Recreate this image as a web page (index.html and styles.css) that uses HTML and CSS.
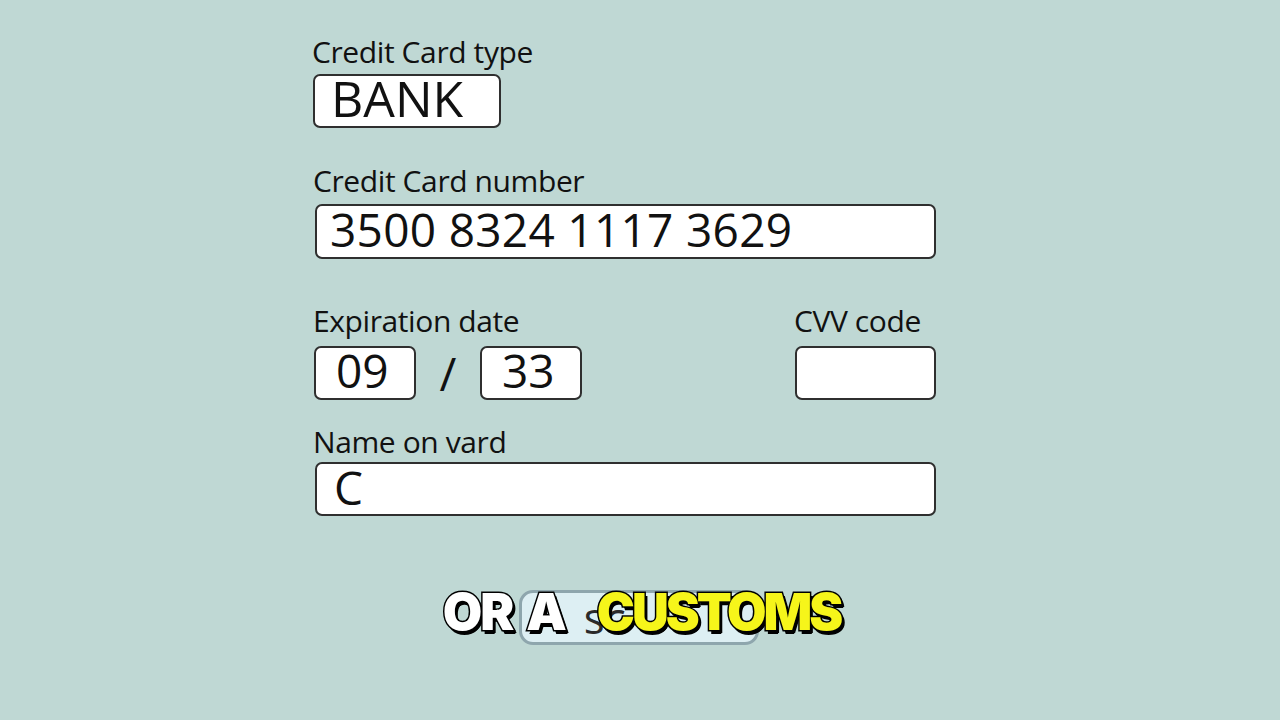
FILE: index.html
```html
<!DOCTYPE html>
<html>
<head>
<meta charset="utf-8">
<link rel="stylesheet" href="styles.css">
</head>
<body>
<div class="form">
  <div class="field field-type">
    <div class="label">Credit Card type</div>
    <div class="box box-type">BANK</div>
  </div>
  <div class="field field-number">
    <div class="label">Credit Card number</div>
    <div class="box box-wide">3500 8324 1117 3629</div>
  </div>
  <div class="row">
    <div class="field">
      <div class="label">Expiration date</div>
      <div class="exp">
        <div class="box box-small">09</div>
        <span class="slash">/</span>
        <div class="box box-small">33</div>
      </div>
    </div>
    <div class="field">
      <div class="label">CVV code</div>
      <div class="box box-cvv"></div>
    </div>
  </div>
  <div class="field field-name">
    <div class="label">Name on vard</div>
    <div class="box box-wide box-name">C</div>
  </div>
</div>
<div class="caption-area">
  <div class="caption">
    <div class="pill"><span class="pill-text">sc</span></div>
    <span class="word white">OR</span>
    <span class="word white">A</span>
    <span class="word yellow">CUSTOMS</span>
  </div>
</div>
</body>
</html>
```
FILE: styles.css
```css
html, body {
  margin: 0;
  padding: 0;
}
body {
  width: 1280px;
  height: 720px;
  background: #bfd8d4;
  font-family: "Open Sans", "Noto Sans", sans-serif;
  color: #111;
  overflow: hidden;
}
.form {
  margin-left: 312px;
  padding-top: 37px;
  width: 624px;
  display: flex;
  flex-direction: column;
}
.label {
  font-size: 30px;
  line-height: 30px;
  letter-spacing: -0.4px;
}
.box {
  box-sizing: border-box;
  background: #fff;
  border: 2px solid #2f2f2f;
  border-radius: 7px;
  height: 54px;
  font-size: 46px;
  line-height: 46px;
  padding-left: 16px;
}
.field-type .box {
  margin-top: 7px;
}
.box-type {
  width: 188px;
  margin-left: 1px;
  padding-left: 16px;
  font-size: 50px;
  line-height: 45px;
}
.field-number {
  margin-top: 38px;
}
.field-number .box {
  margin-top: 8px;
  height: 55px;
}
.field-number .label,
.field-name .label,
.row .label {
  margin-left: 1px;
}
.box-wide {
  width: 621px;
  margin-left: 3px;
  padding-left: 13px;
  letter-spacing: 0.3px;
}
.row {
  margin-top: 47px;
  display: flex;
  justify-content: space-between;
}
.row .field:last-child .label {
  margin-left: 0;
}
.exp {
  display: flex;
  align-items: center;
  margin-left: 2px;
  margin-top: 10px;
}
.box-small {
  width: 102px;
  padding-left: 20px;
  line-height: 44px;
}
.slash {
  font-size: 46px;
  width: 64px;
  text-align: center;
  line-height: 54px;
}
.box-cvv {
  width: 141px;
  margin-left: 1px;
  margin-top: 10px;
}
.field-name {
  margin-top: 27px;
}
.field-name .box {
  margin-top: 5px;
}
.box-name {
  padding-left: 17px;
}
.caption-area {
  margin-top: 70px;
  display: flex;
  justify-content: center;
}
.caption {
  position: relative;
  display: flex;
  gap: 14px;
  align-items: center;
  margin-left: 3px;
}
.pill {
  position: absolute;
  left: 76px;
  top: 4px;
  width: 240px;
  height: 55px;
  box-sizing: border-box;
  background: #ddeff3;
  border: 3px solid #8ea6ad;
  border-radius: 14px;
}
.pill-text {
  position: absolute;
  left: 62px;
  top: 0;
  font-size: 44px;
  color: #2a2a2a;
  line-height: 48px;
}
.word {
  position: relative;
  font-family: "Inter", "Lato", sans-serif;
  font-weight: 900;
  font-size: 51px;
  line-height: 51px;
  letter-spacing: -2px;
  -webkit-text-stroke: 3px #000;
  paint-order: stroke fill;
  text-shadow: 3px 3px 0 #000, 2px 4px 0 #000;
}
.white {
  color: #fff;
}
.yellow {
  color: #f6f51a;
  margin-left: 18px;
  letter-spacing: -3px;
}
```
